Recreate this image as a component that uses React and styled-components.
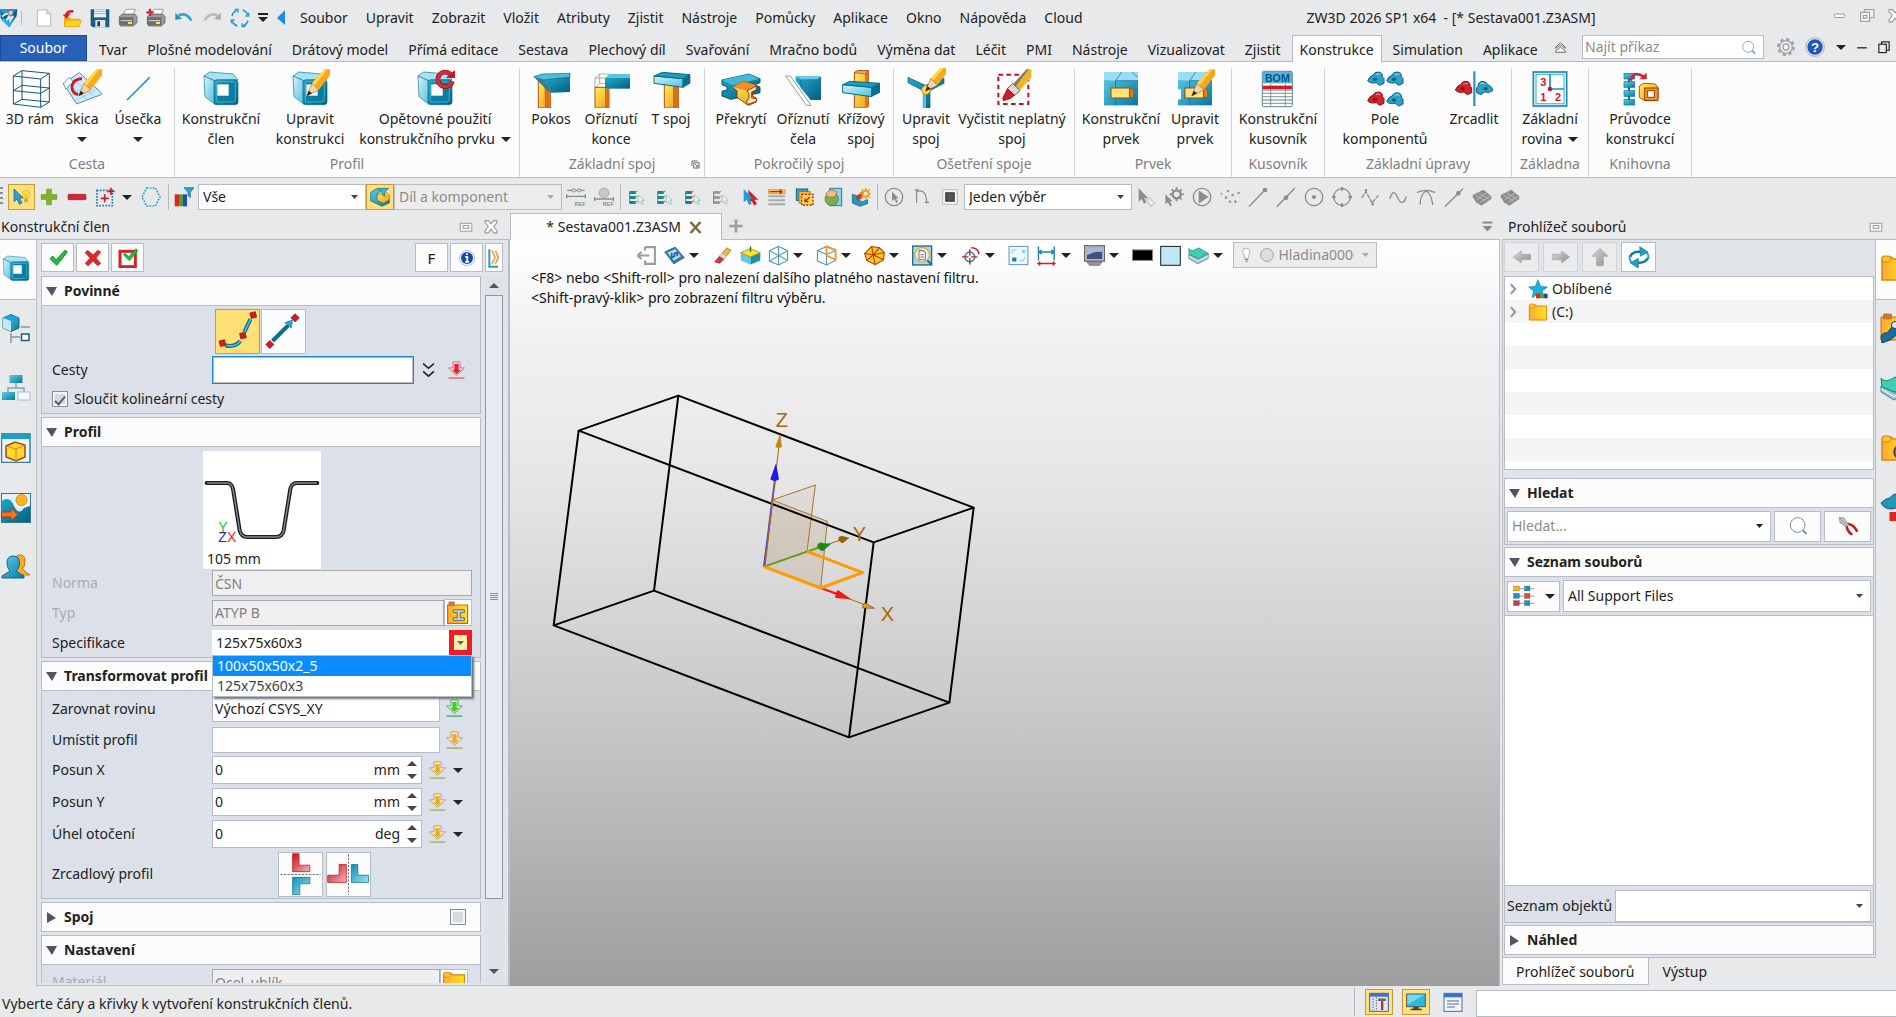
import React, { useState } from "react";
import styled, { createGlobalStyle } from "styled-components";

const GlobalStyle = createGlobalStyle`
    * {
        box-sizing: border-box;
    }

    body {
        margin: 0;
        background: #e8e9eb;
        color: #222222;
        font-family: "Noto Sans", "Open Sans", sans-serif;
        font-size: 14px;
        line-height: 20px;
        overflow: hidden;
    }

    button, input, select {
        font: inherit;
        color: inherit;
    }

    button {
        padding: 0;
        cursor: pointer;
    }

    svg {
        display: block;
        flex: none;
    }
`;

/* ---------- drawing helpers ---------- */

const Defs = () => (
    <svg width="0" height="0" aria-hidden="true">
        <defs>
            <linearGradient id="teal" x1="0" y1="0" x2="1" y2="1">
                <stop offset="0" stopColor="#5cd0ea" />
                <stop offset="1" stopColor="#08779e" />
            </linearGradient>
            <linearGradient id="tealDark" x1="0" y1="0" x2="1" y2="1">
                <stop offset="0" stopColor="#1fa9cd" />
                <stop offset="1" stopColor="#055e80" />
            </linearGradient>
            <linearGradient id="ice" x1="0" y1="0" x2="1" y2="1">
                <stop offset="0" stopColor="#d6f3fb" />
                <stop offset="1" stopColor="#4fc0de" />
            </linearGradient>
            <linearGradient id="gold" x1="0" y1="0" x2="1" y2="1">
                <stop offset="0" stopColor="#fff15a" />
                <stop offset="1" stopColor="#f09a1e" />
            </linearGradient>
            <linearGradient id="folder" x1="0" y1="0" x2="1" y2="0">
                <stop offset="0" stopColor="#ffab2e" />
                <stop offset="1" stopColor="#ffe41a" />
            </linearGradient>
            <linearGradient id="red" x1="0" y1="0" x2="1" y2="1">
                <stop offset="0" stopColor="#c8101c" />
                <stop offset="1" stopColor="#f6b4b8" />
            </linearGradient>
            <linearGradient id="cyan" x1="0" y1="0" x2="1" y2="1">
                <stop offset="0" stopColor="#0d8fb4" />
                <stop offset="1" stopColor="#9fe4f4" />
            </linearGradient>
            <linearGradient id="grey" x1="0" y1="0" x2="1" y2="1">
                <stop offset="0" stopColor="#dcdcdc" />
                <stop offset="1" stopColor="#8c8c8c" />
            </linearGradient>
        </defs>
    </svg>
);

const Cube = () => (
    <g>
        <path d="M9 24 26 12 96 18 111 36 40 38Z" fill="#a9e2f1" stroke="#0f7696" strokeWidth="2" />
        <path d="M9 24 40 38 42 109 12 86Z" fill="url(#ice)" stroke="#0f7696" strokeWidth="2" />
        <rect x="39" y="35" width="72" height="75" rx="9" fill="url(#tealDark)" stroke="#0b6a8c" strokeWidth="2" />
        <path d="M46 46Q46 42 50 42H98Q103 42 103 47V97Q103 102 98 102H51Q46 102 46 97Z" fill="#0b7ea3" stroke="#5ccbe4" strokeWidth="2" />
        <rect x="49" y="49" width="34" height="34" fill="#fff" />
    </g>
);

const Pencil = () => (
    <g>
        <path d="M66 46 104 4H120V22L86 66Z" fill="#f7a81c" />
        <path d="M66 46 104 4H112L73 53Z" fill="#ffd84a" />
        <path d="M50 84 66 46 86 66Z" fill="#f8d3a4" stroke="#a9713a" strokeWidth="2" />
        <path d="M50 84 56 68 66 76Z" fill="#222" />
    </g>
);

const Feature = () => (
    <g>
        <rect x="9" y="12" width="102" height="100" fill="url(#teal)" />
        <path d="M9 12H111V38H44L9 36Z" fill="#9bdcf4" />
        <path d="M44 38V112M44 38H111M62 12 44 38M92 12 111 28" stroke="#0a6a8e" strokeWidth="2" fill="none" />
        <rect x="30" y="60" width="56" height="30" fill="#ffe27a" stroke="#9a4a0a" strokeWidth="3" />
        <path d="M86 60 98 64V86L86 90Z" fill="#e07e10" stroke="#9a4a0a" strokeWidth="2" />
    </g>
);

const Blob = ({ x, y, c, d }) => (
    <g transform={`translate(${x} ${y})`}>
        <path d="M0 26Q6 12 16 10Q20 0 32 0Q46 2 44 14L49 20V34L36 40 26 32Q8 36 0 26Z" fill={c} stroke={d} strokeWidth="3" />
        <ellipse cx="22" cy="22" rx="7" ry="5" fill={d} />
        <path d="M24 8Q30 3 38 8" stroke="#fff" strokeWidth="3" fill="none" opacity=".6" />
    </g>
);

const PullArrow = ({ edge, fill }) => (
    <g>
        <path d="M19 3H41V22H55L30 46 5 22H19Z" fill="#fffbe8" stroke={edge} strokeWidth="3" />
        <path d="M23 9H37V28H45L30 42 15 28H23Z" fill={fill} />
        <path d="M5 54H55" stroke={edge} strokeWidth="4" />
    </g>
);

const FolderShape = () => (
    <g>
        <path d="M4 12Q4 8 8 8H22L27 12H56V54H4Z" fill="url(#folder)" stroke="#d9841a" strokeWidth="3" />
        <path d="M6 6H18L22 12 18 18H6L4 12Z" fill="#ffc428" stroke="#d9841a" strokeWidth="2" />
    </g>
);

const Printer = () => (
    <g>
        <path d="M14 22 24 4H52L44 24Z" fill="#fff" stroke="#777" strokeWidth="2" />
        <path d="M4 26 14 18H50L57 26V44L46 54H8L4 48Z" fill="#9a9a9a" stroke="#555" strokeWidth="2" />
        <path d="M4 28H46V52H8L4 48Z" fill="#6d6d6d" />
        <path d="M8 38H42" stroke="#ddd" strokeWidth="3" />
        <rect x="30" y="42" width="12" height="6" fill="#ffe928" />
    </g>
);

const Magnet = ({ c = "#8c8c8c", children }) => (
    <g fill="none" stroke={c} strokeWidth="4" strokeLinecap="round">{children}</g>
);

const Rows = ({ c, tick, bar = "#0f86a5" }) => (
    <g>
        <path d="M8 14V50" stroke="#777" strokeWidth="3" />
        {[12, 27, 42].map((y) => (
            <rect key={y} x="8" y={y} width="18" height="9" fill={bar} />
        ))}
        {[12, 27, 42].map((y) => (
            <path key={y} d={`M20 ${y + 3}l4 4 7-8`} stroke={tick} strokeWidth="3" fill="none" />
        ))}
        <path d="M34 24V48L40 42 44 52 49 50 45 40H52Z" fill="#f4f4f4" stroke={c} strokeWidth="2" />
    </g>
);

const WireCube = ({ children }) => (
    <g fill="none" stroke="#5b93b4" strokeWidth="3">
        <path d="M30 4 56 16V44L30 57 4 46V16Z" fill="#f2fbfe" />
        {children}
    </g>
);

/* large art is drawn on a 120 grid, small art on a 60 grid */
const LARGE = {
    frame: (
        <g fill="none" stroke="#14587a" strokeWidth="3">
            <path d="M10 24 92 33V118L10 108ZM36 8 118 16V102L36 94ZM10 24 36 8M92 33 118 16M92 118 118 102M10 108 36 94" />
            <path d="M10 68 92 76 118 60 36 52Z" />
        </g>
    ),
    sketch: (
        <g>
            <path d="M4 46 52 14 122 78 44 108Z" fill="#cdeaf8" stroke="#4a8fb2" strokeWidth="3" />
            <path d="M20 50 78 96M36 36 98 86M24 84 84 46M40 98 104 64" stroke="#86bfdc" strokeWidth="2" />
            <path d="M4 46 22 28 36 44 22 52 12 64Z" fill="#f0fafe" stroke="#2f6f92" strokeWidth="2" />
            <path d="M60 32Q30 34 30 60Q32 76 48 80" stroke="#d41222" strokeWidth="8" fill="none" />
            <Pencil />
        </g>
    ),
    line: <path d="M27 96 95 28" stroke="#219bc4" strokeWidth="5" />,
    cube: <Cube />,
    cubeEdit: (
        <g>
            <Cube />
            <Pencil />
        </g>
    ),
    cubeReuse: (
        <g>
            <Cube />
            <path d="M107 19A22 22 0 1 0 112 40" fill="none" stroke="#8d0e16" strokeWidth="14" />
            <path d="M107 19A22 22 0 1 0 112 40" fill="none" stroke="#dd2a33" strokeWidth="10" />
            <path d="M92 30H120V6Z" fill="#c71722" />
        </g>
    ),
    miter: (
        <g>
            <path d="M22 34 42 38 58 74V120H22Z" fill="url(#gold)" stroke="#b4520c" strokeWidth="3" />
            <path d="M40 40 56 72V120H42Z" fill="#d8701a" />
            <path d="M38 34 117 26V72L62 74Z" fill="url(#tealDark)" />
            <path d="M8 26 34 18 117 16V27L38 36Z" fill="#49bfdc" stroke="#0b6a8c" strokeWidth="2" />
            <path d="M8 26 38 36 64 76 50 68Z" fill="#2b7f99" />
        </g>
    ),
    trimEnd: (
        <g>
            <path d="M12 30 26 18H58V48L44 60H12ZM12 30H44M44 30V60M44 30 58 18M26 18V46H58M26 46 12 60" fill="none" stroke="#8b8b8b" strokeWidth="2" />
            <path d="M12 58H54V120H12Z" fill="url(#gold)" stroke="#b4520c" strokeWidth="3" />
            <path d="M42 62H54V120H42Z" fill="#d8701a" />
            <path d="M42 30H117V62H42Z" fill="url(#tealDark)" />
            <path d="M42 30 58 18H117V30Z" fill="#57c6e2" />
        </g>
    ),
    tee: (
        <g>
            <path d="M40 46H82V120H40Z" fill="url(#gold)" stroke="#b4520c" strokeWidth="3" />
            <path d="M66 50H82V120H66Z" fill="#d8701a" />
            <path d="M9 24 96 32V58L9 46Z" fill="url(#ice)" stroke="#0b6a8c" strokeWidth="3" />
            <path d="M9 24 34 13 117 20 96 32Z" fill="#1c9dc0" stroke="#0b6a8c" strokeWidth="3" />
            <path d="M96 32 117 20V46L96 58Z" fill="#0a6c8f" stroke="#0b6a8c" strokeWidth="2" />
        </g>
    ),
    overlap: (
        <g>
            <path d="M3 36 84 18 117 32V44L102 50 117 58V74L30 94 3 84V70L18 66 18 56 3 50Z" fill="url(#tealDark)" stroke="#07546f" strokeWidth="3" />
            <path d="M3 36 84 18 117 32 34 52Z" fill="#41b9d8" />
            <path d="M34 58 66 40 106 52 106 66 94 64V84L106 90V102L82 112 48 88 48 68Z" fill="url(#gold)" stroke="#9a3a0c" strokeWidth="3" />
            <path d="M34 58 66 40 106 52 78 68Z" fill="#ef9226" />
            <path d="M78 68 106 54V66L92 72V90L106 92V100L78 110V96L84 92V78Z" fill="#ffe9b0" stroke="#9a3a0c" strokeWidth="3" />
        </g>
    ),
    trimFace: (
        <g>
            <path d="M38 26H114V96H84L38 38Z" fill="url(#tealDark)" />
            <path d="M34 24 54 34H104L114 24Z" fill="#66cbe4" />
            <path d="M54 34V60L84 96" fill="none" stroke="#0a6484" strokeWidth="2" />
            <path d="M8 24H22L84 112H70Z" fill="none" stroke="#9b9b9b" strokeWidth="3" />
        </g>
    ),
    cross: (
        <g>
            <path d="M40 14 50 8H82V116L72 120H40Z" fill="url(#gold)" stroke="#b4420c" strokeWidth="3" />
            <path d="M72 18 82 8V116L72 120Z" fill="#e0771a" />
            <path d="M40 14 50 8H82L72 18Z" fill="#f0a860" stroke="#b4420c" strokeWidth="2" />
            <path d="M5 50 92 58V86L5 74Z" fill="url(#ice)" stroke="#0b6a8c" strokeWidth="3" />
            <path d="M5 50 26 40 117 46 92 58Z" fill="#1c9dc0" stroke="#0b6a8c" strokeWidth="3" />
            <path d="M92 58 117 46V74L92 86Z" fill="#0a6c8f" />
        </g>
    ),
    jointEdit: (
        <g>
            <path d="M6 28 58 52 114 30V46L72 68V120H52V68L6 44Z" fill="url(#tealDark)" stroke="#075a78" strokeWidth="2" />
            <path d="M52 68H60V120H52Z" fill="#55c6e2" />
            <circle cx="60" cy="66" r="13" fill="#ffe52a" stroke="#c88a10" strokeWidth="3" />
            <g transform="translate(8 -14)">
                <Pencil />
            </g>
        </g>
    ),
    clean: (
        <g>
            <rect x="19" y="20" width="90" height="88" fill="none" stroke="#c4121e" strokeWidth="6" strokeDasharray="14 10" />
            <path d="M62 50 104 4H118V28L82 68Z" fill="#f3b51e" />
            <path d="M62 50 104 4H110L70 57Z" fill="#7b7b7b" />
            <path d="M46 62 62 46 84 68 68 82Z" fill="#d9d9d9" stroke="#666" strokeWidth="3" />
            <path d="M46 62 68 82 54 92 34 98 32 90Z" fill="#cf1c2a" stroke="#7c0d14" strokeWidth="2" />
        </g>
    ),
    feature: <Feature />,
    featureEdit: (
        <g>
            <Feature />
            <path d="M4 64H18V94H4Z" fill="#fff" />
            <Pencil />
        </g>
    ),
    bom: (
        <g>
            <rect x="13" y="10" width="90" height="106" rx="4" fill="#fff" stroke="#5a8296" strokeWidth="3" />
            <path d="M14 12H102V46H14Z" fill="#55b4dd" />
            <path d="M14 66H102M14 76H102M14 86H102M14 96H102M14 106H102" stroke="#93a7b2" strokeWidth="4" />
            <path d="M38 46V114M82 46V114" stroke="#5a7686" strokeWidth="2" />
            <rect x="14" y="53" width="88" height="10" fill="#d41826" />
            <text x="58" y="41" textAnchor="middle" fontFamily="Liberation Sans, sans-serif" fontWeight="700" fontSize="32" fill="#0b5677">BOM</text>
        </g>
    ),
    pattern: (
        <g>
            <Blob x={8} y={12} c="#2ba3c6" d="#0b5f80" />
            <Blob x={65} y={12} c="#2ba3c6" d="#0b5f80" />
            <Blob x={8} y={72} c="#d3222e" d="#8c0f18" />
            <Blob x={65} y={74} c="#2ba3c6" d="#0b5f80" />
        </g>
    ),
    mirror: (
        <g>
            <path d="M61 10V114" stroke="#299dc2" strokeWidth="7" />
            <Blob x={4} y={40} c="#d3222e" d="#8c0f18" />
            <g transform="translate(119 0) scale(-1 1)">
                <Blob x={2} y={40} c="#2ba3c6" d="#0b5f80" />
            </g>
        </g>
    ),
    plane: (
        <g fontFamily="Liberation Sans, sans-serif" fontWeight="700" fontSize="33" fill="#cf1623">
            <rect x="10" y="12" width="100" height="102" fill="#f2fbfe" stroke="#178aad" strokeWidth="5" />
            <rect x="18" y="19" width="84" height="88" fill="#fff" stroke="#5cc4de" strokeWidth="4" />
            <path d="M60 18V63H102" fill="none" stroke="#1792b6" strokeWidth="5" />
            <circle cx="60" cy="63" r="7" />
            <text x="31" y="53">3</text>
            <text x="31" y="100">1</text>
            <text x="75" y="100">2</text>
        </g>
    ),
    wizard: (
        <g>
            <path d="M27 16V110" stroke="#0d6f92" strokeWidth="6" />
            {[16, 41, 68, 94].map((y) => (
                <rect key={y} x="12" y={y} width="32" height="17" fill="url(#teal)" stroke="#0b7a9c" strokeWidth="2" />
            ))}
            <path d="M32 38Q42 6 70 26" stroke="#d8222e" strokeWidth="8" fill="none" />
            <path d="M58 34 80 34 80 14Z" fill="#d8222e" />
            <path d="M58 54 72 46 106 48 114 60V92L104 98H74L58 88Z" fill="url(#gold)" stroke="#b4520c" strokeWidth="3" />
            <rect x="74" y="60" width="40" height="37" fill="#f59b1c" stroke="#8d3d08" strokeWidth="3" />
            <rect x="83" y="68" width="20" height="20" fill="#fff" stroke="#8d3d08" strokeWidth="3" />
        </g>
    ),
};

const SMALL = {
    logo: (
        <g>
            <path d="M0 4H52L50 24 28 58 2 30Z" fill="#0a5c96" />
            <path d="M0 4H50L40 14 6 16Z" fill="#1fa1e0" />
            <path d="M28 58 2 34 12 30 30 44 50 24Z" fill="#27b2ee" />
            <path d="M6 26Q20 12 30 20L20 36 40 24 28 42" stroke="#e6ecf0" strokeWidth="6" fill="none" />
            <circle cx="32" cy="14" r="8" fill="#c9ced2" stroke="#444" strokeWidth="2" />
        </g>
    ),
    file: <path d="M10 6H38L50 18V54H10ZM38 6V18H50" fill="#fff" stroke="#9aa0a8" strokeWidth="2" />,
    open: (
        <g>
            <path d="M6 26H22L28 32H54V56H6Z" fill="#f6a81c" />
            <path d="M12 36H58L52 56H8Z" fill="#ffd21e" stroke="#e79a16" strokeWidth="2" />
            <path d="M12 24Q14 8 34 10" stroke="#d5232d" strokeWidth="8" fill="none" />
            <path d="M2 20 26 16 14 32Z" fill="#d5232d" />
        </g>
    ),
    save: (
        <g>
            <path d="M2 4H58V58H8L2 52Z" fill="#1c5f86" />
            <rect x="12" y="4" width="36" height="24" fill="#e9f4fa" />
            <path d="M12 10H48M12 17H48" stroke="#7fbede" strokeWidth="3" />
            <rect x="16" y="36" width="30" height="22" fill="#dfe5ea" />
            <rect x="22" y="40" width="8" height="15" fill="#1c3f56" />
        </g>
    ),
    print: <Printer />,
    printAdd: (
        <g>
            <Printer />
            <path d="M12 2V24M1 13H23" stroke="#dc2430" strokeWidth="7" />
        </g>
    ),
    undo: (
        <g>
            <path d="M14 22Q38 12 52 38" stroke="#3aa4c8" strokeWidth="8" fill="none" />
            <path d="M4 14V36L24 32Z" fill="#2b93ba" />
        </g>
    ),
    redo: (
        <g>
            <path d="M46 22Q22 12 8 38" stroke="#b9bcbf" strokeWidth="8" fill="none" />
            <path d="M56 14V36L36 32Z" fill="#a6a9ac" />
        </g>
    ),
    loop: (
        <g fill="none" stroke="#2b9ec6" strokeWidth="5">
            <path d="M6 24A26 26 0 0 1 22 6M38 6A26 26 0 0 1 54 22M54 38A26 26 0 0 1 38 54M22 54A26 26 0 0 1 6 38" />
            <path d="M14 4H24V14M56 14V24H46M46 56H36V46M4 46V36H14" strokeWidth="4" />
        </g>
    ),
    pick: (
        <g>
            <path d="M6 6V44L15 36 22 52 30 48 23 33H34Z" fill="#1ea6dc" stroke="#0b5f96" strokeWidth="2" />
            <circle cx="42" cy="22" r="12" fill="#ffe04a" stroke="#dca51c" strokeWidth="2" />
            <path d="M37 20 42 26 47 20M42 26V34" stroke="#dca51c" strokeWidth="2" fill="none" />
            <path d="M37 35H47V46H37Z" fill="#d99a3c" />
        </g>
    ),
    plus: <path d="M22 4H38V22H56V38H38V56H22V38H4V22H22Z" fill="#7cb52c" stroke="#5f9618" strokeWidth="2" />,
    minus: <rect x="3" y="22" width="54" height="16" rx="3" fill="#cf2837" stroke="#a01824" strokeWidth="2" />,
    boxAdd: (
        <g>
            <rect x="6" y="10" width="46" height="46" fill="none" stroke="#1785ad" strokeWidth="5" strokeDasharray="5 4" />
            <path d="M29 22V46M17 34H41M48 2V24M37 13H59" stroke="#d0182a" strokeWidth="5" />
        </g>
    ),
    hex: <path d="M17 3H43L57 30 43 57H17L3 30Z" fill="none" stroke="#2e9cc4" strokeWidth="5" strokeDasharray="5 4" />,
    filter: (
        <g>
            <rect x="2" y="22" width="13" height="36" fill="#e0241e" />
            <rect x="15" y="22" width="12" height="36" fill="#46a52a" />
            <rect x="27" y="22" width="12" height="36" fill="#2446c0" />
            <path d="M30 2H60L49 16V32L42 26V16Z" fill="#2ba5cc" stroke="#0c6d90" strokeWidth="2" />
        </g>
    ),
    part: (
        <g>
            <path d="M2 16 22 4 34 10 22 22V40L40 48 58 38V48L36 58 2 42Z" fill="url(#teal)" stroke="#0b6282" strokeWidth="2" />
            <path d="M22 24 46 14 58 24V38L40 48 22 40Z" fill="url(#gold)" stroke="#b96a10" strokeWidth="2" />
            <path d="M26 4H56L44 16V28L36 22V16Z" fill="#39b6dc" stroke="#0c6d90" strokeWidth="2" />
        </g>
    ),
    refA: (
        <g>
            <path d="M4 10H18M28 10H34M44 10H56M2 28H58" stroke="#8c8c8c" strokeWidth="4" />
            <path d="M2 22V34M58 22V34" stroke="#8c8c8c" strokeWidth="4" />
            <circle cx="23" cy="10" r="5" fill="none" stroke="#8c8c8c" strokeWidth="3" />
            <circle cx="39" cy="10" r="5" fill="none" stroke="#8c8c8c" strokeWidth="3" />
            <text x="26" y="56" fontSize="17" fontWeight="700" fill="#8c8c8c" fontFamily="Liberation Sans, sans-serif">REF</text>
        </g>
    ),
    refB: (
        <g>
            <circle cx="30" cy="18" r="15" fill="#c9c9c9" stroke="#9a9a9a" strokeWidth="2" />
            <path d="M2 36H58M2 30V42M58 30V42" stroke="#8c8c8c" strokeWidth="4" />
            <text x="26" y="58" fontSize="17" fontWeight="700" fill="#8c8c8c" fontFamily="Liberation Sans, sans-serif">REF</text>
        </g>
    ),
    listA: <Rows c="#8aa" tick="#3c9a28" />,
    listB: <Rows c="#8aa" tick="#3c9a28" />,
    listRed: <Rows c="#8aa" tick="#c8303a" />,
    listC: <Rows c="#aaa" tick="#9a9a9a" bar="#9c9c9c" />,
    cursorRed: (
        <g>
            <path d="M28 8V50L38 42 46 56 54 50 46 38H58Z" fill="#d91e2a" />
            <path d="M14 6V46L23 38 30 54 38 50 31 35H42Z" fill="#17a2d8" />
        </g>
    ),
    layersRed: (
        <g>
            <path d="M4 8H54V20H4Z" fill="#ffd24a" stroke="#b98a14" strokeWidth="2" />
            <path d="M8 14H44L38 8M44 14 38 20" stroke="#c8141e" strokeWidth="4" fill="none" />
            <path d="M4 28H54M4 40H54M4 52H54" stroke="#a7abb0" strokeWidth="6" />
        </g>
    ),
    boxes: (
        <g>
            <rect x="4" y="6" width="34" height="34" fill="#3ba7c6" stroke="#0c6482" strokeWidth="3" />
            <rect x="12" y="14" width="34" height="34" fill="#f6b52c" stroke="#a35c0a" strokeWidth="2" />
            <rect x="20" y="22" width="34" height="32" fill="#ffe04a" stroke="#c8141e" strokeWidth="4" strokeDasharray="6 4" />
            <path d="M30 44 44 30M30 44V34M30 44H40" stroke="#c8141e" strokeWidth="4" />
        </g>
    ),
    globe: (
        <g>
            <rect x="20" y="4" width="36" height="52" fill="#8fd3ea" stroke="#1c83a8" strokeWidth="3" />
            <circle cx="26" cy="36" r="20" fill="#7cae5a" stroke="#3d6a48" strokeWidth="2" />
            <path d="M8 20Q24 0 42 16L36 30H14Z" fill="#f0bb7c" stroke="#99612a" strokeWidth="2" />
        </g>
    ),
    gearCube: (
        <g>
            <path d="M4 22 18 26V38L34 44 50 38V50L26 58 4 48Z" fill="#2a97ba" stroke="#0b5c7a" strokeWidth="2" />
            <path d="M18 26 34 12V34L18 42Z" fill="#d7303a" />
            <circle cx="44" cy="20" r="9" fill="none" stroke="#f2a21e" strokeWidth="7" />
            <path d="M44 2V10M44 30V38M26 20H34M54 20H60M31 7 37 13M51 27 57 33M57 7 51 13M37 27 31 33" stroke="#f2a21e" strokeWidth="4" />
        </g>
    ),
    gArrow: (
        <Magnet>
            <circle cx="30" cy="30" r="26" />
            <path d="M24 14V42L31 36 37 48 42 45 36 34H44Z" fill="#8c8c8c" stroke="none" />
        </Magnet>
    ),
    gCurve: (
        <Magnet>
            <path d="M12 6V48M6 6H18M12 12Q44 0 46 50M40 48H52" />
        </Magnet>
    ),
    gSquare: (
        <g>
            <rect x="6" y="6" width="48" height="48" fill="#f4f4f4" stroke="#999" strokeWidth="2" />
            <rect x="16" y="16" width="28" height="28" fill="#555" stroke="#222" strokeWidth="3" />
        </g>
    ),
    gHand: (
        <g>
            <path d="M8 4V44L17 36 24 50 31 46 25 33H36Z" fill="#8c8c8c" />
            <path d="M30 38 40 32 56 50 44 58Z" fill="#eee" stroke="#999" strokeWidth="2" />
        </g>
    ),
    gGear: (
        <g>
            <circle cx="38" cy="22" r="12" fill="none" stroke="#8c8c8c" strokeWidth="7" />
            <path d="M38 1V8M38 36V43M17 22H24M52 22H59M23 7 29 13M47 31 53 37M53 7 47 13" stroke="#8c8c8c" strokeWidth="6" />
            <path d="M4 22V52L12 46 18 58 24 55 18 43H26Z" fill="#8c8c8c" />
        </g>
    ),
    gPlay: (
        <Magnet>
            <circle cx="30" cy="30" r="26" />
            <path d="M22 14 46 30 22 46Z" fill="#8c8c8c" />
        </Magnet>
    ),
    gDots: (
        <g fill="#999">
            <circle cx="4" cy="20" r="3" />
            <circle cx="24" cy="12" r="4" />
            <circle cx="38" cy="24" r="4" />
            <circle cx="56" cy="18" r="4" />
            <circle cx="18" cy="32" r="4" />
            <circle cx="30" cy="44" r="4" />
            <circle cx="46" cy="44" r="4" />
        </g>
    ),
    gLine: (
        <Magnet>
            <path d="M4 58 50 10" />
            <circle cx="51" cy="9" r="5" fill="#8c8c8c" />
        </Magnet>
    ),
    gMid: (
        <Magnet>
            <path d="M4 58 56 4" />
            <circle cx="30" cy="32" r="5" fill="#8c8c8c" />
        </Magnet>
    ),
    gCentre: (
        <Magnet>
            <circle cx="30" cy="30" r="26" />
            <circle cx="30" cy="30" r="4" fill="#8c8c8c" />
        </Magnet>
    ),
    gQuad: (
        <Magnet>
            <circle cx="30" cy="30" r="25" />
            <path d="M30 3V7M30 53V57M3 30H7M53 30H57" strokeWidth="8" />
        </Magnet>
    ),
    gWave: (
        <Magnet>
            <path d="M6 32 18 14 36 48 54 26" strokeDasharray="10 6" />
            <circle cx="18" cy="10" r="2" />
            <circle cx="38" cy="52" r="2" />
        </Magnet>
    ),
    gSine: (
        <Magnet>
            <path d="M6 34Q16 4 26 26T42 46Q50 46 54 30" />
        </Magnet>
    ),
    gArch: (
        <Magnet>
            <path d="M4 16Q30 4 56 16M12 52Q14 20 30 12Q46 20 50 52" />
        </Magnet>
    ),
    gSlash: (
        <Magnet>
            <path d="M4 58 56 6" />
            <circle cx="43" cy="19" r="5" fill="#8c8c8c" />
        </Magnet>
    ),
    gMesh: (
        <g>
            <path d="M2 24 34 8 58 28 58 36 46 44 28 56 12 46 2 30Z" fill="#8d8d8d" />
            <path d="M10 24 40 42M20 18 50 36M14 38 44 18M24 46 54 28" stroke="#d0d0d0" strokeWidth="2" />
        </g>
    ),
    check: <path d="M6 32 14 24 24 36 52 6 58 12 26 52Z" fill="#1fbf3c" stroke="#0f8a24" strokeWidth="3" />,
    cross: <path d="M12 4 30 20 46 4 56 10 40 30 56 48 46 56 30 40 14 56 4 48 20 30 4 12Z" fill="#e2242c" stroke="#a8141c" strokeWidth="2" />,
    checkBox: (
        <g>
            <rect x="6" y="10" width="46" height="46" fill="#fff" stroke="#d8202a" strokeWidth="9" />
            <path d="M16 20 22 16 32 26 54 2 60 8 34 38Z" fill="#1fbf3c" stroke="#0f8a24" strokeWidth="2" />
        </g>
    ),
    info: (
        <g>
            <circle cx="30" cy="30" r="25" fill="#fff" stroke="#9cb4dc" strokeWidth="3" />
            <circle cx="30" cy="30" r="20" fill="#1748ae" />
            <path d="M30 14V20M24 26H31V42M24 43H37" stroke="#fff" strokeWidth="6" fill="none" />
        </g>
    ),
    dock: (
        <g>
            <path d="M16 4V56H42" stroke="#2b9cc0" strokeWidth="6" fill="none" />
            <path d="M24 8 33 28 24 48M34 8 43 28 34 48" stroke="#f0a03c" strokeWidth="5" fill="none" />
        </g>
    ),
    tree: (
        <g>
            <path d="M4 10 20 3 36 10V30L20 37 4 30Z" fill="url(#teal)" stroke="#0b6a8c" strokeWidth="2" />
            <path d="M4 10 20 16 36 10 20 3Z" fill="#19a5cd" />
            <path d="M4 10 20 16V37L4 30Z" fill="#c9e6f4" />
            <path d="M40 28H58M20 40V60M20 48H38" stroke="#7c98aa" strokeWidth="3" />
            <rect x="41" y="42" width="15" height="13" fill="#fff" stroke="#1f5d7e" strokeWidth="3" />
        </g>
    ),
    org: (
        <g>
            <path d="M30 18V30M14 42V30H46V42" stroke="#8ba2ae" strokeWidth="3" fill="none" />
            <rect x="17" y="4" width="26" height="16" fill="url(#teal)" />
            <rect x="2" y="38" width="26" height="16" fill="url(#teal)" />
            <rect x="34" y="38" width="24" height="16" fill="#f3fafc" stroke="#9fbfce" strokeWidth="2" />
        </g>
    ),
    window: (
        <g>
            <rect x="1" y="1" width="57" height="58" fill="#e6f5fb" stroke="#3b7fa0" strokeWidth="3" />
            <path d="M0 0H59V12H0Z" fill="#1f9ec4" />
            <path d="M10 26 28 18 48 24V48L30 56 10 48Z" fill="#ffd92e" stroke="#b4420c" strokeWidth="3" />
            <path d="M10 26 30 32 48 24M30 32V56" stroke="#d9841a" strokeWidth="2" fill="none" />
        </g>
    ),
    scene: (
        <g>
            <rect x="1" y="1" width="58" height="58" fill="#e2f2f9" stroke="#2f7696" strokeWidth="2" />
            <path d="M1 16Q18 4 26 26Q36 46 46 30L58 26V58H1Z" fill="url(#tealDark)" />
            <circle cx="41" cy="14" r="11" fill="#ffb424" stroke="#e08a12" strokeWidth="2" />
            <path d="M1 38H20V30L34 43 20 56V48H1Z" fill="#f2732a" stroke="#a83e0a" strokeWidth="2" />
        </g>
    ),
    users: (
        <g>
            <path d="M34 4Q50 2 48 18Q48 28 42 32L58 44H36L26 30V12Z" fill="#f9ad1e" stroke="#c97a0c" strokeWidth="2" />
            <path d="M12 20Q12 6 24 6Q38 6 37 22Q36 32 30 36L46 46V50H2V46L18 36Q12 30 12 20Z" fill="url(#teal)" stroke="#0b6a8c" strokeWidth="2" />
        </g>
    ),
    pathCurve: (
        <g>
            <path d="M12 50Q26 54 34 44" stroke="#0c7396" strokeWidth="6" fill="none" />
            <path d="M40 31 49 12" stroke="#0c7396" strokeWidth="6" />
            <path d="M12 50Q26 54 34 44M40 31 49 12" stroke="#5fc8e2" strokeWidth="2" fill="none" />
            <path d="M3 44 11 42 13 50 5 52ZM33 33 41 31 43 39 35 41ZM48 3 56 1 58 9 50 11Z" fill="#d11a28" stroke="#8c0f18" />
        </g>
    ),
    pathLine: (
        <g>
            <path d="M14 44 38 20" stroke="#0c6d90" strokeWidth="6" />
            <path d="M44 12 42 26 31 17Z" fill="#25a0c4" />
            <path d="M4 49 10 43 16 49 10 55ZM41 10 47 4 53 10 47 16Z" fill="#d11a28" stroke="#8c0f18" />
        </g>
    ),
    pullRed: <PullArrow edge="#c8646c" fill="#e8223c" />,
    pullGreen: <PullArrow edge="#3aa864" fill="#3cd02a" />,
    pullGold: <PullArrow edge="#a8a052" fill="#f4a832" />,
    more: <path d="M13 8 30 23 47 8M13 33 30 48 47 33" stroke="#222" strokeWidth="5" fill="none" />,
    lib: (
        <g>
            <path d="M4 10H54V56H4Z" fill="url(#folder)" stroke="#b97412" strokeWidth="3" />
            <rect x="6" y="1" width="16" height="12" rx="3" fill="#c8773c" />
            <path d="M18 22H46V29H36V42H46V49H18V42H28V29H18Z" fill="#ccc" stroke="#555" strokeWidth="2" />
        </g>
    ),
    folder: <FolderShape />,
    mirrorH: (
        <g>
            <path d="M2 30H58" stroke="#333" strokeWidth="1" strokeDasharray="3 2" />
            <path d="M19 1H28V17H43V26H19Z" fill="url(#red)" stroke="#b4101c" />
            <path d="M19 34H43V43H29V58H19Z" fill="url(#cyan)" stroke="#0b6a8c" />
        </g>
    ),
    mirrorV: (
        <g>
            <path d="M30 2V58" stroke="#333" strokeWidth="1" strokeDasharray="3 2" />
            <path d="M17 16H27V41H1V31H17Z" fill="url(#red)" stroke="#b4101c" />
            <path d="M34 16H43V31H58V41H34Z" fill="url(#cyan)" stroke="#0b6a8c" />
        </g>
    ),
    exit: <path d="M26 6H54V54H26V44M26 6V16M4 30H38M4 30 16 20M4 30 16 40" fill="none" stroke="#9c9c9c" strokeWidth="6" />,
    style: (
        <g>
            <path d="M2 20 32 6 58 36 28 54Z" fill="#3a7fa6" stroke="#1d5576" strokeWidth="2" />
            <path d="M10 22 32 12 48 32 28 44Z" fill="#bfe0f2" />
            <path d="M22 22V36L30 32V24L38 22V32" stroke="#15639a" strokeWidth="5" fill="none" />
        </g>
    ),
    eraser: (
        <g>
            <path d="M22 32 42 8 54 15 34 40Z" fill="#f2b63a" stroke="#97640e" strokeWidth="2" />
            <path d="M8 48 22 32 34 40 22 52Z" fill="#d8323e" stroke="#98141e" strokeWidth="2" />
            <path d="M22 32 28 25 40 33 34 40Z" fill="#ddd" />
        </g>
    ),
    slab: (
        <g>
            <path d="M2 22 30 34V56L2 44Z" fill="#6cc7e6" />
            <path d="M30 34 58 22V44L30 56Z" fill="#1c8cb0" />
            <path d="M2 22 30 10 58 22 30 34Z" fill="#ffe32a" stroke="#8a7a10" strokeWidth="2" />
            <path d="M30 4V20" stroke="#1f8a3a" strokeWidth="4" />
        </g>
    ),
    wire: (
        <WireCube>
            <path d="M30 4V57M4 16 56 44M56 16 4 46" />
        </WireCube>
    ),
    face: (
        <WireCube>
            <path d="M4 16 30 27 56 16M30 27V57" />
            <path d="M30 4 56 14V42L30 30Z" stroke="#f29a1e" strokeWidth="5" />
        </WireCube>
    ),
    shade: (
        <g stroke="#b43a0c" strokeWidth="3">
            <path d="M22 4 44 8 58 22 56 42 32 56 8 44 2 24Z" fill="#ffc61e" />
            <path d="M2 24 26 28 58 22M22 4 26 28 32 56M44 8 26 28 8 44M26 28 56 42" fill="none" />
        </g>
    ),
    zoomPage: (
        <g>
            <rect x="2" y="3" width="54" height="54" fill="#a6dcf0" stroke="#1e6f96" strokeWidth="4" />
            <circle cx="29" cy="28" r="21" fill="#e9edf0" stroke="#e8b020" strokeWidth="4" />
            <path d="M20 16H32L38 22V42H20Z" fill="#fff" stroke="#777" strokeWidth="3" />
            <path d="M24 28H34M24 34H34" stroke="#777" strokeWidth="3" />
            <path d="M44 44 56 56" stroke="#1e6f96" strokeWidth="6" />
        </g>
    ),
    target: (
        <g fill="none">
            <circle cx="28" cy="34" r="14" stroke="#2f7fa2" strokeWidth="4" />
            <path d="M28 12V56M6 34H50" stroke="#c81c2a" strokeWidth="4" />
            <path d="M32 8Q52 8 54 26" stroke="#c81c2a" strokeWidth="4" />
            <circle cx="28" cy="34" r="4" fill="#fff" />
        </g>
    ),
    fit: (
        <g>
            <rect x="3" y="4" width="54" height="52" fill="#eef8fc" stroke="#5f9cba" strokeWidth="3" />
            <path d="M12 26V14H24M48 34Q46 46 34 46" stroke="#8cd2e4" strokeWidth="3" fill="none" />
            <rect x="12" y="36" width="12" height="11" fill="#2278a0" />
            <rect x="40" y="14" width="9" height="9" fill="#8ad2e8" />
        </g>
    ),
    dim: (
        <g>
            <path d="M7 4V44M52 4V44M10 20H50M16 14 9 20 16 26M44 14 51 20 44 26" stroke="#1e86aa" strokeWidth="4" fill="none" />
            <path d="M6 53H54M12 48 6 53 12 58M48 48 54 53 48 58" stroke="#d41e2a" strokeWidth="4" fill="none" />
        </g>
    ),
    monitor: (
        <g>
            <rect x="1" y="2" width="58" height="44" fill="#b9bcc2" stroke="#555" strokeWidth="3" />
            <rect x="8" y="8" width="44" height="32" fill="#3e4f80" />
            <path d="M8 8H52V20Q30 16 8 30Z" fill="#a9b6d4" />
            <path d="M8 48H52L44 58H16Z" fill="#9a9a9a" stroke="#555" strokeWidth="2" />
        </g>
    ),
    blackBar: <rect x="1" y="14" width="58" height="30" fill="#000" stroke="#888" strokeWidth="3" />,
    blueBox: <rect x="2" y="4" width="56" height="54" fill="#bde6f6" stroke="#222" strokeWidth="3" />,
    sheets: (
        <g>
            <path d="M2 26V38L28 54 58 38V24L30 40Z" fill="#9fc5d8" stroke="#4b7f98" strokeWidth="2" />
            <path d="M2 32 28 47 58 32" stroke="#fff" strokeWidth="2" fill="none" />
            <path d="M2 10Q10 22 30 8L58 24 30 38 4 28Z" fill="#3fd0b2" stroke="#158a78" strokeWidth="2" />
        </g>
    ),
    bulb: (
        <g>
            <path d="M20 6Q30 2 38 8Q46 18 38 28L36 40H24L22 28Q12 16 20 6Z" fill="#fff" stroke="#aaa" strokeWidth="3" />
            <path d="M24 44H36M26 50H34" stroke="#888" strokeWidth="4" />
        </g>
    ),
    disc: <circle cx="30" cy="30" r="24" fill="#dedede" stroke="#909090" strokeWidth="3" />,
    back: <path d="M4 30 28 12V22H56V38H28V48Z" fill="url(#grey)" stroke="#a4a4a4" strokeWidth="2" />,
    forward: <path d="M56 30 32 12V22H4V38H32V48Z" fill="url(#grey)" stroke="#a4a4a4" strokeWidth="2" />,
    up: <path d="M30 4 54 28H40V56H20V28H6Z" fill="url(#grey)" stroke="#a4a4a4" strokeWidth="2" />,
    refresh: (
        <g>
            <path d="M6 30Q10 14 36 16" stroke="#0e7c9e" strokeWidth="7" fill="none" />
            <path d="M54 32Q50 46 24 46" stroke="#0e7c9e" strokeWidth="7" fill="none" />
            <path d="M32 2 54 16 34 28Z" fill="#1ea0c4" stroke="#0e7c9e" strokeWidth="2" />
            <path d="M28 34 6 46 28 60Z" fill="#1ea0c4" stroke="#0e7c9e" strokeWidth="2" />
            <path d="M50 18Q58 24 55 36M10 44Q2 38 5 26" stroke="#1ea0c4" strokeWidth="5" fill="none" />
        </g>
    ),
    chevron: <path d="M22 12 38 30 22 48" stroke="#999" strokeWidth="8" fill="none" />,
    star: (
        <g>
            <path d="M30 2 38 22 58 24 43 36 48 56 30 46 12 56 17 36 2 24 22 22Z" fill="#1cb0dc" stroke="#0f86ac" strokeWidth="2" />
            <rect x="24" y="44" width="12" height="14" fill="#e0241e" />
            <rect x="36" y="44" width="12" height="14" fill="#46a52a" />
            <rect x="48" y="44" width="11" height="14" fill="#2446a0" />
        </g>
    ),
    search: (
        <g>
            <circle cx="29" cy="27" r="22" fill="#fff" stroke="#8a8a8a" strokeWidth="3" />
            <path d="M45 43 56 54" stroke="#3c8fb6" strokeWidth="5" />
        </g>
    ),
    pliers: (
        <g fill="none">
            <path d="M32 24Q48 28 56 44M26 30Q28 46 40 54" stroke="#cc1822" strokeWidth="8" strokeLinecap="round" />
            <path d="M4 4 18 6 32 26 26 32 6 20Z" fill="#c4c4c4" stroke="#777" strokeWidth="2" />
            <path d="M6 8 26 26" stroke="#777" strokeWidth="2" />
        </g>
    ),
    grid: (
        <g>
            <path d="M4 10H58M4 30H58M4 50H58" stroke="#777" strokeWidth="2" />
            <rect x="2" y="3" width="15" height="13" fill="#ffb61e" stroke="#8a5a0a" />
            <rect x="32" y="3" width="14" height="13" fill="#2a8fc0" stroke="#0b4f70" />
            <rect x="2" y="23" width="15" height="13" fill="#2a8fc0" stroke="#0b4f70" />
            <rect x="32" y="23" width="14" height="13" fill="#e0501e" stroke="#7a1d0a" />
            <rect x="2" y="43" width="15" height="13" fill="#c83a4a" stroke="#0b4f70" />
            <rect x="32" y="43" width="14" height="13" fill="#2a8fc0" stroke="#0b4f70" />
        </g>
    ),
    folderPart: (
        <g>
            <path d="M2 8H58V54H2Z" fill="url(#folder)" stroke="#b97412" strokeWidth="2" />
            <rect x="6" y="1" width="18" height="12" rx="3" fill="#c8773c" />
            <path d="M2 46Q6 38 14 40L24 28Q30 18 38 24V40L20 54 4 60Z" fill="#1c6d98" stroke="#0b4662" strokeWidth="2" />
            <circle cx="30" cy="24" r="7" fill="#dfeaf0" stroke="#0b4662" strokeWidth="2" />
        </g>
    ),
    folderBall: (
        <g>
            <FolderShape />
            <circle cx="42" cy="38" r="14" fill="#d8442a" stroke="#4a3a6a" strokeWidth="3" />
        </g>
    ),
    partRed: (
        <g>
            <path d="M2 20Q12 10 20 10Q26 0 40 2V28L24 32Q8 32 2 20Z" fill="#2496bc" stroke="#0b5f80" strokeWidth="2" />
            <rect x="19" y="38" width="20" height="18" fill="#e2241e" />
        </g>
    ),
    tools: (
        <g>
            <rect x="2" y="4" width="56" height="54" fill="#dce8f6" stroke="#3f62a8" strokeWidth="3" />
            <path d="M2 4H58V14H2Z" fill="#3a6fd4" />
            <path d="M12 20V54M22 16V56" stroke="#555" strokeWidth="3" strokeDasharray="4 4" />
            <path d="M28 20H50V27H43V54H36V27H28Z" fill="#c62a2a" />
            <path d="M28 20H50V27H28Z" fill="#666" />
        </g>
    ),
    screen: (
        <g>
            <rect x="2" y="6" width="56" height="38" fill="#29bcd8" stroke="#555" strokeWidth="3" />
            <path d="M4 8H56L4 38Z" fill="#6fdcee" />
            <path d="M22 44H38V50H48V55H14V50H22Z" fill="#444" />
        </g>
    ),
    note: (
        <g>
            <rect x="3" y="4" width="54" height="54" fill="#f2f5fa" stroke="#4a69ac" strokeWidth="3" />
            <path d="M3 4H57V16H3Z" fill="#3a6fd4" />
            <path d="M12 27H48M12 36H48M12 45H36" stroke="#8b97aa" strokeWidth="4" />
        </g>
    ),
    gear: (
        <g fill="none" stroke="#a2a6aa">
            <circle cx="30" cy="30" r="23" strokeWidth="8" strokeDasharray="10 8" />
            <circle cx="30" cy="30" r="19" fill="#eceded" strokeWidth="4" />
            <circle cx="30" cy="30" r="9" fill="#f6f6f6" strokeWidth="4" />
        </g>
    ),
    help: (
        <g>
            <circle cx="30" cy="30" r="28" fill="#e2e8f2" stroke="#8796b2" strokeWidth="2" />
            <circle cx="30" cy="30" r="23" fill="#2257b8" />
            <text x="30" y="44" textAnchor="middle" fontFamily="Liberation Sans, sans-serif" fontWeight="700" fontSize="40" fill="#fff">?</text>
        </g>
    ),
    collapse: <path d="M8 28 30 8 52 28V34L30 18 8 34ZM8 46 30 28 52 46V52H8Z" fill="#fff" stroke="#555" strokeWidth="4" />,
    winMin: <rect x="10" y="24" width="40" height="14" rx="3" fill="#fff" stroke="#999" strokeWidth="4" />,
    winRestore: (
        <g fill="#f4f4f4" stroke="#999" strokeWidth="4">
            <rect x="22" y="6" width="34" height="30" />
            <rect x="6" y="16" width="34" height="34" />
            <rect x="16" y="28" width="14" height="10" />
        </g>
    ),
    mdiMin: <path d="M6 34H54" stroke="#333" strokeWidth="7" />,
    mdiRestore: (
        <g fill="#e8e9eb" stroke="#222" strokeWidth="5">
            <rect x="20" y="8" width="32" height="36" />
            <rect x="8" y="18" width="32" height="36" />
        </g>
    ),
    pin: (
        <g fill="#f4f4f4" stroke="#999" strokeWidth="4">
            <rect x="5" y="14" width="50" height="34" />
            <rect x="18" y="24" width="24" height="12" />
        </g>
    ),
    closeX: <path d="M8 6H20L30 18 40 6H52V14L40 28 52 44V52H40L30 38 20 52H8V44L20 28 8 14Z" fill="#fff" stroke="#999" strokeWidth="4" />,
    tabX: <path d="M10 8 50 52M50 8 10 52" stroke="#7a6838" strokeWidth="10" />,
    tabPlus: <path d="M30 8V52M8 30H52" stroke="#a49c9c" strokeWidth="9" />,
    tabMenu: <path d="M10 10H50V18H10ZM10 28H50L30 50Z" fill="#8d8a8a" />,
    launcher: <path d="M6 40V6H44M18 18H54V54H18ZM24 24 46 46M46 30V46H30" fill="none" stroke="#666" strokeWidth="6" />,
};

const Art = ({ name, size = 20, large }) => (
    <svg width={size} height={size} viewBox={large ? "0 0 120 120" : "0 0 60 60"} aria-hidden="true">
        {large ? LARGE[name] : SMALL[name]}
    </svg>
);

const Caret = ({ small, color = "#222", dir = "down" }) => {
    const d = { down: "M0 0H10L5 5Z", up: "M0 5H10L5 0Z" }[dir];
    return (
        <svg width={small ? 7 : 10} height={small ? 4 : 5} viewBox="0 0 10 5" preserveAspectRatio="none" aria-hidden="true">
            <path d={d} fill={color} />
        </svg>
    );
};

/* ---------- shell ---------- */

const Shell = styled.div`
    display: flex;
    flex-direction: column;
    height: 100vh;
    overflow: hidden;
    white-space: nowrap;
`;

const TitleBar = styled.header`
    display: flex;
    align-items: center;
    height: 35px;
`;

const Divider = styled.span`
    width: 1px;
    height: ${(props) => props.$h || 26}px;
    margin: 0 ${(props) => props.$gap || 1}px;
    background: #b4b8bf;
`;

const Slot = styled.button`
    display: flex;
    align-items: center;
    justify-content: center;
    flex: none;
    width: ${(props) => props.$w || 28}px;
    height: 26px;
    background: none;
    border: 1px solid transparent;
    ${(props) => props.$on && `
        background: #ffe07a;
        border-color: #c99a3a;
    `}
`;

const QuickTools = styled.div`
    display: flex;
    padding-left: 7px;
`;

const Menu = styled.nav`
    display: flex;
    gap: 18px;
    margin-left: 10px;
`;

const MenuItem = styled.button`
    background: none;
    border: none;
`;

const AppTitle = styled.div`
    flex: 1;
    padding-left: 224px;
    overflow: hidden;
`;

const WindowButtons = styled.div`
    display: flex;
    margin: -4px -13px 0 0;
`;

const TabBar = styled.div`
    display: flex;
    height: 27px;
    border-bottom: 1px solid #b8bcc4;
`;

const FileTab = styled.button`
    width: 87px;
    height: 26px;
    margin-right: 2px;
    background: #2860b8;
    border: 1px solid #1c4c9c;
    color: #ffffff;
`;

const RibbonTab = styled.button`
    height: 27px;
    padding: ${(props) => (props.$on ? "2px 7px 0" : "3px 10px 0")};
    margin: ${(props) => (props.$on ? "0 1px" : "0")};
    background: ${(props) => (props.$on ? "#fcfcfc" : "none")};
    border: ${(props) => (props.$on ? "1px solid #b8bcc4" : "none")};
    border-bottom: none;
`;

const TabTools = styled.div`
    display: flex;
    align-items: center;
    margin-left: auto;
    height: 24px;
`;

const SearchField = styled.label`
    display: flex;
    align-items: center;
    width: 182px;
    height: 24px;
    margin: 0 8px 0 10px;
    padding-right: 7px;
    background: #ffffff;
    border: 1px solid #b8bcc4;

    input {
        flex: 1;
        min-width: 0;
        padding: 0 2px;
        background: none;
        border: none;
        outline: none;
    }

    input::placeholder {
        color: #8c8c8c;
    }
`;

const Ribbon = styled.div`
    display: flex;
    height: 116px;
    background: #fcfcfc;
    border-bottom: 1px solid #b8bcc4;
`;

const RibbonGroup = styled.section`
    display: flex;
    flex-direction: column;
    flex: none;
    width: ${(props) => props.$w}px;
    margin-top: 6px;
    border-right: 1px solid #d0d3d8;
`;

const Tools = styled.div`
    display: flex;
    flex: 1;
    padding-left: ${(props) => props.$pad || 0}px;
`;

const Tool = styled.button`
    display: flex;
    flex-direction: column;
    align-items: center;
    width: ${(props) => props.$w}px;
    background: none;
    border: none;

    > svg {
        margin-bottom: 1px;
    }
`;

const ToolLine = styled.span`
    display: flex;
    align-items: center;
    gap: 6px;
    height: 20px;
`;

const GroupCaption = styled.div`
    display: flex;
    align-items: center;
    justify-content: center;
    height: 26px;
    color: #7f7f7f;
    position: relative;

    svg {
        position: absolute;
        right: 4px;
    }
`;

const SelectionBar = styled.div`
    display: flex;
    align-items: center;
    height: 35px;
    padding-top: 3px;
    flex: none;
`;

const Handle = styled.span`
    width: 3px;
    height: 20px;
    margin-right: 5px;
    background: repeating-linear-gradient(#8c8c8c 0 2px, #e8e9eb 2px 5px);
`;

const SelectBox = styled.span`
    display: flex;
    align-items: center;
    position: relative;
    flex: ${(props) => (props.$w ? "none" : 1)};
    width: ${(props) => (props.$w ? `${props.$w}px` : "auto")};
    height: ${(props) => props.$h || 26}px;
    background: ${(props) => (props.$off ? "#ececed" : "#ffffff")};
    border: 1px solid #b8bcc4;
    color: ${(props) => (props.$off ? "#8c8c8c" : "#222222")};

    select {
        flex: 1;
        min-width: 0;
        height: 100%;
        padding: 0 22px 0 4px;
        appearance: none;
        background: none;
        border: none;
        outline: none;
        opacity: 1;
    }

    > svg:last-child {
        position: absolute;
        right: 7px;
        pointer-events: none;
    }
`;

const Select = ({ label, options, w, h, off, children }) => (
    <SelectBox $w={w} $h={h} $off={off}>
        {children}
        <select aria-label={label} disabled={off}>
            {options.map((o) => <option key={o}>{o}</option>)}
        </select>
        <Caret small color={off ? "#aaaaaa" : "#444444"} />
    </SelectBox>
);

const Workspace = styled.div`
    display: flex;
    flex: 1;
    min-height: 0;
`;

/* ---------- panels ---------- */

const LeftPanel = styled.aside`
    display: flex;
    flex-direction: column;
    width: 509px;
    flex: none;
`;

const RightPanel = styled.aside`
    display: flex;
    flex-direction: column;
    width: 394px;
    flex: none;
    margin-left: 2px;
`;

const PanelTitle = styled.div`
    display: flex;
    align-items: center;
    gap: 10px;
    height: 27px;
    padding: 2px ${(props) => props.$right || 10}px 0 ${(props) => props.$left || 1}px;
    border-bottom: 1px solid #b8bcc4;
    flex: none;

    span {
        flex: 1;
    }
`;

const PanelRow = styled.div`
    display: flex;
    flex: 1;
    min-height: 0;
`;

const Strip = styled.nav`
    display: flex;
    flex-direction: column;
    width: ${(props) => props.$w}px;
    overflow: hidden;
    flex: none;
`;

const StripTab = styled.button`
    display: flex;
    align-items: center;
    flex: none;
    height: 60px;
    padding: 0 0 4px ${(props) => props.$pad}px;
    background: ${(props) => (props.$on ? "#fcfcfc" : "none")};
    border: none;
    ${(props) => props.$on && "border-bottom: 1px solid #b8bcc4;"}
`;

const PanelBody = styled.div`
    display: flex;
    flex-direction: column;
    flex: 1;
    min-width: 0;
    background: #e1e4e8;
    border: 1px solid #b8bcc4;
    border-top: none;
    padding: ${(props) => props.$pad};
`;

const CommandBar = styled.div`
    display: flex;
    gap: 2px;
    margin-bottom: 4px;
`;

const Spacer = styled.span`
    flex: 1;
`;

const CommandButton = styled.button`
    display: flex;
    align-items: center;
    justify-content: center;
    overflow: hidden;
    width: ${(props) => props.$w || 33}px;
    height: 29px;
    background: #fcfcfc;
    border: 1px solid #b8bcc4;
    font-size: 15px;
`;

const ScrollArea = styled.div`
    display: flex;
    flex: 1;
    min-height: 0;
    gap: 4px;
`;

const Sections = styled.div`
    display: flex;
    flex-direction: column;
    gap: 3px;
    flex: 1;
    overflow: hidden;
`;

const ScrollTrack = styled.div`
    display: flex;
    flex-direction: column;
    align-items: center;
    width: 18px;
    background: #dde1e8;
`;

const ScrollArrow = styled.button`
    display: flex;
    align-items: center;
    justify-content: center;
    width: 100%;
    height: ${(props) => props.$h}px;
    background: none;
    border: none;
`;

const Thumb = styled.div`
    display: flex;
    align-items: center;
    justify-content: center;
    width: 18px;
    flex: 605;
    background: #e8ebf1;
    border: 1px solid #8f96a6;

    span {
        width: 8px;
        height: 8px;
        background: repeating-linear-gradient(#8b8f98 0 1px, transparent 1px 2px);
    }
`;

const ThumbRest = styled.div`
    flex: 60;
`;

const SectionBox = styled.section`
    flex: none;
    background: #dce0e8;
    border: 1px solid #b8bcc6;
`;

const SectionHead = styled.header`
    display: flex;
    align-items: center;
    height: ${(props) => (props.$flat ? 28 : 29)}px;
    padding: 0 14px 0 4px;
    background: #fcfcfc;
    border-bottom: ${(props) => (props.$flat ? "none" : "1px solid #b8bcc6")};

    button {
        display: flex;
        align-items: center;
        gap: 7px;
        flex: 1;
        background: none;
        border: none;
        font-weight: 700;
    }
`;

const Section = ({ title, closed, extra, children }) => (
    <SectionBox>
        <SectionHead $flat={closed}>
            <button type="button" aria-expanded={!closed}>
                <svg width="11" height="11" viewBox="0 0 11 11" aria-hidden="true">
                    <path d={closed ? "M1 0V11L10 6Z" : "M0 1H11L6 10Z"} fill="#4f5561" />
                </svg>
                {title}
            </button>
            {extra}
        </SectionHead>
        {children}
    </SectionBox>
);

const Field = styled.div`
    display: flex;
    align-items: center;
    height: ${(props) => props.$h || 30}px;
    padding: 0 8px 0 10px;
    position: relative;

    > label:first-child, > span:first-child {
        width: 160px;
        flex: none;
        color: ${(props) => (props.$off ? "#a9acb0" : "#222222")};
    }
`;

const TextInput = styled.input`
    flex: ${(props) => (props.$w ? "none" : 1)};
    width: ${(props) => (props.$w ? `${props.$w}px` : "auto")};
    min-width: 0;
    height: ${(props) => props.$h || 26}px;
    padding: 0 2px;
    background: #ffffff;
    border: 1px solid #b8bcc6;
    outline: none;

    &:disabled {
        background: #efefef;
        border-color: #a9a9a9;
        color: #808080;
    }

    ${(props) => props.$focus && `
        border-color: #1286e8;
        box-shadow: inset 0 0 0 1px #b8bcc6;
    `}
`;

const PickRow = styled.div`
    display: flex;
    gap: ${(props) => props.$gap || 1}px;
    padding: ${(props) => props.$pad || "3px 0 1px 173px"};
`;

const PickButton = styled.button`
    display: flex;
    align-items: center;
    justify-content: center;
    width: 45px;
    height: 45px;
    background: ${(props) => (props.$on ? "#ffe077" : "#fcfcfc")};
    border: 1px solid ${(props) => (props.$on ? "#c99a3a" : "#b8bcc6")};
`;

const IconButton = styled.button`
    display: flex;
    align-items: center;
    justify-content: center;
    width: ${(props) => props.$w || 28}px;
    height: 27px;
    flex: none;
    background: ${(props) => (props.$boxed ? "#fcfcfc" : "none")};
    border: 1px solid ${(props) => (props.$boxed ? "#b8bcc6" : "transparent")};
`;

const CheckLine = styled.div`
    display: flex;
    align-items: center;
    gap: 6px;
    height: 28px;
    padding-left: 10px;
`;

const CheckInput = styled.input`
    appearance: none;
    display: grid;
    place-items: center;
    width: 16px;
    height: 16px;
    margin: 0;
    background: #d5dae2;
    border: 1px solid #8b8e94;
    box-shadow: inset 0 0 0 2px #f4f5f7;

    &:checked::after {
        content: "";
        width: 4px;
        height: 9px;
        border: solid #4a6288;
        border-width: 0 2px 2px 0;
        transform: rotate(40deg);
    }
`;

const Preview = styled.figure`
    display: flex;
    flex-direction: column;
    width: 118px;
    height: 118px;
    margin: 4px 0 0 161px;
    background: #ffffff;

    figcaption {
        padding-left: 4px;
    }
`;

const Combo = styled.div`
    display: flex;
    flex: 1;
    height: 25px;
    background: #ffffff;
    position: relative;

    input {
        flex: 1;
        min-width: 0;
        padding: 0 4px;
        background: none;
        border: none;
        outline: none;
    }
`;

const ComboButton = styled.button`
    display: flex;
    align-items: center;
    justify-content: center;
    width: 23px;
    background: #fff0b0;
    border: 5px solid #ee1c25;
`;

const Options = styled.ul`
    position: absolute;
    top: 25px;
    left: 0;
    right: 0;
    z-index: 5;
    margin: 0;
    padding: 0;
    list-style: none;
    background: #ffffff;
    border: 1px solid #b8bcc6;
    box-shadow: 2px 2px 2px #6d7078;
`;

const Option = styled.li`
    height: 20px;
    padding-left: 4px;
    background: ${(props) => (props.$on ? "#0a8cff" : "#ffffff")};
    color: ${(props) => (props.$on ? "#ffffff" : "#444444")};
`;

const Spin = styled.div`
    display: flex;
    align-items: center;
    width: 210px;
    height: 28px;
    padding-right: 4px;
    background: #ffffff;
    border: 1px solid #b8bcc6;

    input {
        flex: 1;
        min-width: 0;
        padding: 0 2px;
        border: none;
        outline: none;
    }
`;

const SpinArrows = styled.div`
    display: flex;
    flex-direction: column;
    margin-left: 7px;

    button {
        height: 13px;
        background: none;
        border: none;
    }
`;

const Number = ({ id, label, unit }) => {
    const [value, setValue] = useState("0");

    return (
        <Field $h={32}>
            <label htmlFor={id}>{label}</label>
            <Spin>
                <input id={id} value={value} onChange={(e) => setValue(e.target.value)} />
                {unit}
                <SpinArrows>
                    <button type="button" aria-label="+"><Caret dir="up" color="#444444" /></button>
                    <button type="button" aria-label="-"><Caret color="#444444" /></button>
                </SpinArrows>
            </Spin>
            <IconButton $w={31} type="button" aria-label={label}><Art name="pullGold" size={19} /></IconButton>
            <Caret />
        </Field>
    );
};

/* ---------- document ---------- */

const Document = styled.main`
    display: flex;
    flex-direction: column;
    flex: 1;
    min-width: 0;
`;

const DocTabs = styled.div`
    display: flex;
    align-items: flex-end;
    height: 27px;
    border-bottom: 1px solid #b8bcc4;
    padding-left: 1px;
    flex: none;
`;

const DocTab = styled.button`
    display: flex;
    align-items: center;
    justify-content: flex-end;
    gap: 7px;
    width: 212px;
    height: 27px;
    margin-bottom: -1px;
    padding: 0 18px 0 0;
    background: #fcfcfc;
    border: 1px solid #b8bcc4;
    border-bottom: none;
`;

const Canvas = styled.div`
    flex: 1;
    min-height: 0;
    position: relative;
    border: solid #b8bcc4;
    border-width: 0 1px;
    background: linear-gradient(#ffffff 0%, #f2f2f2 12%, #e6e6e6 32%, #c8c8c8 64%, #9e9e9e 100%);
`;

const Scene = styled.svg`
    position: absolute;
    inset: 0;
    width: 100%;
    height: 100%;
`;

const ViewBar = styled.div`
    display: flex;
    align-items: center;
    justify-content: center;
    height: 30px;
    position: relative;
`;

const CaretSlot = styled.button`
    display: flex;
    width: 20px;
    padding: 0;
    background: none;
    border: none;
`;

const Hint = styled.p`
    margin: -2px 0 0 21px;
    position: relative;
    color: #111111;
`;

const FileTree = styled.ul`
    height: 194px;
    margin: 0 0 8px;
    padding: 0;
    list-style: none;
    border: 1px solid #b8bcc6;
    background: repeating-linear-gradient(#ffffff 0 23px, #f5f5f5 23px 46px);
    flex: none;
`;

const TreeRow = styled.li`
    display: flex;
    align-items: center;
    gap: 4px;
    height: 23px;

    svg + svg {
        margin-left: 3px;
    }
`;

const NavButton = styled(CommandButton)`
    width: 35px;
    height: 30px;
    margin-right: 2px;
    background: ${(props) => (props.disabled ? "#ebecee" : "#fcfcfc")};
    border-color: ${(props) => (props.disabled ? "#d2d4d8" : "#b8bcc6")};
`;

const FileRow = styled.div`
    display: flex;
    align-items: center;
    gap: 3px;
    height: ${(props) => props.$h || 36}px;
    padding: ${(props) => props.$pt || 0}px 2px 0;
`;

const RowButton = styled.button`
    display: flex;
    align-items: center;
    justify-content: center;
    gap: 10px;
    width: ${(props) => props.$w}px;
    height: 31px;
    background: #fcfcfc;
    border: 1px solid #b8bcc6;
`;

const FileSearch = styled(SelectBox)`
    input {
        flex: 1;
        min-width: 0;
        padding: 0 4px;
        border: none;
        outline: none;
    }

    input::placeholder {
        color: #8c8c8c;
    }
`;

const FileStack = styled.div`
    display: flex;
    flex-direction: column;
    flex: 1;
    min-height: 0;
    gap: 2px;

    > section:nth-child(2) {
        display: flex;
        flex-direction: column;
        flex: 1;
    }
`;

const FileList = styled.div`
    flex: 1;
    background: #ffffff;
    border: solid #b8bcc6;
    border-width: 1px 0;
`;

const BottomTabs = styled.div`
    display: flex;
    height: 28px;
    flex: none;
`;

const BottomTab = styled.button`
    height: 27px;
    padding: 2px 13px 0;
    background: ${(props) => (props.$on ? "#fcfcfc" : "none")};
    border: 1px solid ${(props) => (props.$on ? "#b8bcc4" : "transparent")};
    border-top: none;
`;

const StatusBar = styled.footer`
    display: flex;
    align-items: center;
    gap: 9px;
    height: 31px;
    padding-left: 2px;
    flex: none;

    > span:first-child {
        flex: 1;
        padding-top: 5px;
    }
`;

const CommandLine = styled.input`
    width: 420px;
    height: 27px;
    margin-top: 4px;
    border: 1px solid #b8bcc4;
    border-right: none;
    background: #ffffff;
    outline: none;
`;

/* ---------- data ---------- */

const QUICK = ["file", "open", "save", "print", "printAdd", "undo", "redo", "loop"];

const MENU = ["Soubor", "Upravit", "Zobrazit", "Vložit", "Atributy", "Zjistit", "Nástroje", "Pomůcky", "Aplikace", "Okno", "Nápověda", "Cloud"];

const TABS = [
    "Tvar", "Plošné modelování", "Drátový model", "Přímá editace", "Sestava", "Plechový díl", "Svařování",
    "Mračno bodů", "Výměna dat", "Léčit", "PMI", "Nástroje", "Vizualizovat", "Zjistit", "Konstrukce", "Simulation", "Aplikace"
];

const RIBBON = [
    { name: "Cesta", w: 175, tools: [
        { icon: "frame", w: 60, text: ["3D rám"] },
        { icon: "sketch", w: 44, text: ["Skica", ""], drop: true },
        { icon: "line", w: 68, text: ["Úsečka", ""], drop: true },
    ] },
    { name: "Profil", w: 345, tools: [
        { icon: "cube", w: 92, text: ["Konstrukční", "člen"] },
        { icon: "cubeEdit", w: 86, text: ["Upravit", "konstrukci"] },
        { icon: "cubeReuse", w: 164, text: ["Opětovné použití", "konstrukčního prvku"], drop: true },
    ] },
    { name: "Základní spoj", w: 185, pad: 2, launcher: true, tools: [
        { icon: "miter", w: 58, text: ["Pokos"] },
        { icon: "trimEnd", w: 62, text: ["Oříznutí", "konce"] },
        { icon: "tee", w: 58, text: ["T spoj"] },
    ] },
    { name: "Pokročilý spoj", w: 189, pad: 7, tools: [
        { icon: "overlap", w: 58, text: ["Překrytí"] },
        { icon: "trimFace", w: 66, text: ["Oříznutí", "čela"] },
        { icon: "cross", w: 50, text: ["Křížový", "spoj"] },
    ] },
    { name: "Ošetření spoje", w: 181, pad: 4, tools: [
        { icon: "jointEdit", w: 56, text: ["Upravit", "spoj"] },
        { icon: "clean", w: 116, text: ["Vyčistit neplatný", "spoj"] },
    ] },
    { name: "Prvek", w: 157, pad: 4, tools: [
        { icon: "feature", w: 84, text: ["Konstrukční", "prvek"] },
        { icon: "featureEdit", w: 64, text: ["Upravit", "prvek"] },
    ] },
    { name: "Kusovník", w: 93, tools: [
        { icon: "bom", w: 92, text: ["Konstrukční", "kusovník"] },
    ] },
    { name: "Základní úpravy", w: 187, pad: 5, tools: [
        { icon: "pattern", w: 110, text: ["Pole", "komponentů"] },
        { icon: "mirror", w: 68, text: ["Zrcadlit"] },
    ] },
    { name: "Základna", w: 77, tools: [
        { icon: "plane", w: 76, text: ["Základní", "rovina"], drop: true },
    ] },
    { name: "Knihovna", w: 103, tools: [
        { icon: "wizard", w: 102, text: ["Průvodce", "konstrukcí"] },
    ] },
];

const PICK_TOOLS = ["listA", "listB", "listRed", "listC", "cursorRed", "layersRed", "boxes", "globe", "gearCube"];
const SNAP_TOOLS = ["gHand", "gGear", "gPlay", "gDots", "gLine", "gMid", "gCentre", "gQuad", "gWave", "gSine", "gArch", "gSlash", "gMesh", "gMesh"];

const VIEW_TOOLS = [
    ["exit"], ["style", true], ["eraser"], ["slab"], ["wire", true], ["face", true], ["shade", true], ["zoomPage", true],
    ["target", true], ["fit"], ["dim", true], ["monitor", true], ["blackBar"], ["blueBox"], ["sheets", true]
];

const LEFT_STRIP = ["cube", "tree", "org", "window", "scene", "users"];
const RIGHT_STRIP = ["folder", "folderPart", "sheets", "folderBall", "partRed"];

/* ---------- parts ---------- */

const Header = () => (
    <>
        <TitleBar>
            <Art name="logo" />
            <Divider $h={14} />
            <QuickTools>
                {QUICK.map((name) => (
                    <Slot key={name} type="button" aria-label={name}><Art name={name} /></Slot>
                ))}
                <Slot $w={18} type="button" aria-label="Panel">
                    <svg width="10" height="9" viewBox="0 0 10 9" aria-hidden="true">
                        <path d="M0 0H10V2H0ZM0 4H10L5 9Z" fill="#222" />
                    </svg>
                </Slot>
                <Slot $w={18} type="button" aria-label="Skrýt">
                    <svg width="8" height="15" viewBox="0 0 8 15" aria-hidden="true">
                        <path d="M8 0V15L0 8Z" fill="#1c8ce0" />
                    </svg>
                </Slot>
            </QuickTools>
            <Menu>
                {MENU.map((m) => <MenuItem key={m} type="button">{m}</MenuItem>)}
            </Menu>
            <AppTitle>ZW3D 2026 SP1 x64&nbsp; - [* Sestava001.Z3ASM]</AppTitle>
            <WindowButtons>
                <Slot type="button" aria-label="Minimalizovat"><Art name="winMin" size={15} /></Slot>
                <Slot type="button" aria-label="Obnovit"><Art name="winRestore" size={16} /></Slot>
                <Slot type="button" aria-label="Zavřít"><Art name="closeX" size={16} /></Slot>
            </WindowButtons>
        </TitleBar>
        <TabBar>
            <FileTab type="button">Soubor</FileTab>
            {TABS.map((t) => (
                <RibbonTab key={t} type="button" $on={t === "Konstrukce"}>{t}</RibbonTab>
            ))}
            <TabTools>
                <Slot $w={24} type="button" aria-label="Sbalit"><Art name="collapse" size={13} /></Slot>
                <SearchField>
                    <input placeholder="Najít příkaz" aria-label="Najít příkaz" />
                    <Art name="search" size={15} />
                </SearchField>
                <Slot type="button" aria-label="Volby"><Art name="gear" /></Slot>
                <Slot $w={30} type="button" aria-label="Pomoc"><Art name="help" /></Slot>
                <Slot $w={22} type="button" aria-label="Další"><Caret /></Slot>
                <Slot $w={20} type="button" aria-label="Minimalizovat okno"><Art name="mdiMin" size={12} /></Slot>
                <Slot $w={24} type="button" aria-label="Obnovit okno"><Art name="mdiRestore" size={14} /></Slot>
            </TabTools>
        </TabBar>
    </>
);

const RibbonTools = () => (
    <Ribbon>
        {RIBBON.map((g) => (
            <RibbonGroup key={g.name} $w={g.w}>
                <Tools $pad={g.pad}>
                    {g.tools.map((t) => (
                        <Tool key={t.icon} type="button" $w={t.w}>
                            <Art large name={t.icon} size={40} />
                            {t.text.map((line, i) => (
                                <ToolLine key={i}>
                                    {line}
                                    {t.drop && i === t.text.length - 1 && <Caret />}
                                </ToolLine>
                            ))}
                        </Tool>
                    ))}
                </Tools>
                <GroupCaption>
                    {g.name}
                    {g.launcher && <Art name="launcher" size={9} />}
                </GroupCaption>
            </RibbonGroup>
        ))}
    </Ribbon>
);

const Selection = () => (
    <SelectionBar>
        <Handle />
        <Slot $on $w={27} type="button" aria-label="Výběr"><Art name="pick" /></Slot>
        <Slot type="button" aria-label="Přidat"><Art name="plus" size={18} /></Slot>
        <Slot type="button" aria-label="Odebrat"><Art name="minus" /></Slot>
        <Slot type="button" aria-label="Okno"><Art name="boxAdd" /></Slot>
        <Slot $w={16} type="button" aria-label="Možnosti"><Caret /></Slot>
        <Slot $w={32} type="button" aria-label="Polygon"><Art name="hex" /></Slot>
        <Divider />
        <Slot type="button" aria-label="Filtr"><Art name="filter" /></Slot>
        <Select label="Filtr" w={168} options={["Vše"]} />
        <Slot $on type="button" aria-label="Díl"><Art name="part" /></Slot>
        <Select label="Rozsah" w={168} off options={["Díl a komponent"]} />
        <Slot type="button" aria-label="Ref 1"><Art name="refA" /></Slot>
        <Slot type="button" aria-label="Ref 2"><Art name="refB" /></Slot>
        <Divider $gap={2} />
        {PICK_TOOLS.map((name) => (
            <Slot key={name} type="button" aria-label={name}><Art name={name} /></Slot>
        ))}
        <Divider $gap={2} />
        <Slot type="button" aria-label="Směr"><Art name="gArrow" /></Slot>
        <Slot type="button" aria-label="Křivka"><Art name="gCurve" size={18} /></Slot>
        <Slot type="button" aria-label="Plocha"><Art name="gSquare" size={18} /></Slot>
        <Select label="Výběr" w={168} options={["Jeden výběr"]} />
        {SNAP_TOOLS.map((name, i) => (
            <Slot key={i} type="button" aria-label={name}><Art name={name} /></Slot>
        ))}
    </SelectionBar>
);

const ProfileDrawing = () => (
    <svg width="118" height="98" viewBox="0 0 354 294" aria-hidden="true">
        <path
            d="M11 96H72Q86 96 90 114L110 238Q114 258 134 258H218Q238 258 242 238L262 114Q266 96 282 96H343"
            fill="none" stroke="#1c1c1c" strokeWidth="12" strokeLinecap="round"
        />
        <path
            d="M12 96H72Q86 96 90 114L110 238Q114 258 134 258H218Q238 258 242 238L262 114Q266 96 282 96H342"
            fill="none" stroke="#8a8a8a" strokeWidth="4"
        />
        <g fontFamily="Liberation Sans, sans-serif" fontSize="42">
            <text x="46" y="242" fill="#19c819">Y</text>
            <text x="72" y="272" fill="#e81c1c">X</text>
            <text x="46" y="272" fill="#2020e0">Z</text>
        </g>
    </svg>
);

const MemberForm = () => {
    const [spec, setSpec] = useState("125x75x60x3");
    const [merge, setMerge] = useState(true);

    return (
        <Sections>
            <Section title="Povinné">
                <PickRow>
                    <PickButton $on type="button" aria-label="Křivka"><Art name="pathCurve" size={41} /></PickButton>
                    <PickButton type="button" aria-label="Body"><Art name="pathLine" size={41} /></PickButton>
                </PickRow>
                <Field>
                    <label htmlFor="paths">Cesty</label>
                    <TextInput id="paths" $focus $w={202} $h={28} />
                    <IconButton type="button" aria-label="Více"><Art name="more" size={19} /></IconButton>
                    <IconButton type="button" aria-label="Vybrat"><Art name="pullRed" size={19} /></IconButton>
                </Field>
                <CheckLine>
                    <CheckInput id="merge" type="checkbox" checked={merge} onChange={(e) => setMerge(e.target.checked)} />
                    <label htmlFor="merge">Sloučit kolineární cesty</label>
                </CheckLine>
            </Section>
            <Section title="Profil">
                <Preview>
                    <ProfileDrawing />
                    <figcaption>105 mm</figcaption>
                </Preview>
                <Field $off $h={28}>
                    <label htmlFor="norm">Norma</label>
                    <TextInput id="norm" disabled defaultValue="ČSN" />
                </Field>
                <Field $off $h={31}>
                    <label htmlFor="type">Typ</label>
                    <TextInput id="type" disabled defaultValue="ATYP B" />
                    <IconButton $boxed type="button" aria-label="Knihovna"><Art name="lib" size={24} /></IconButton>
                </Field>
                <Field $h={29}>
                    <label htmlFor="spec">Specifikace</label>
                    <Combo>
                        <input id="spec" role="combobox" aria-expanded="true" value={spec} onChange={(e) => setSpec(e.target.value)} />
                        <ComboButton type="button" aria-label="Rozbalit"><Caret small color="#666666" /></ComboButton>
                        <Options role="listbox">
                            <Option role="option" $on onClick={() => setSpec("100x50x50x2_5")}>100x50x50x2_5</Option>
                            <Option role="option" onClick={() => setSpec("125x75x60x3")}>125x75x60x3</Option>
                        </Options>
                    </Combo>
                </Field>
            </Section>
            <Section title="Transformovat profil">
                <Field $h={35}>
                    <label htmlFor="align">Zarovnat rovinu</label>
                    <TextInput id="align" $w={228} defaultValue="Výchozí CSYS_XY" />
                    <IconButton type="button" aria-label="Vybrat rovinu"><Art name="pullGreen" size={19} /></IconButton>
                </Field>
                <Field $h={28}>
                    <label htmlFor="place">Umístit profil</label>
                    <TextInput id="place" $w={228} />
                    <IconButton type="button" aria-label="Vybrat bod"><Art name="pullGold" size={19} /></IconButton>
                </Field>
                <Number id="shiftX" label="Posun X" unit="mm" />
                <Number id="shiftY" label="Posun Y" unit="mm" />
                <Number id="angle" label="Úhel otočení" unit="deg" />
                <Field $h={48}>
                    <span>Zrcadlový profil</span>
                    <PickRow $gap={3} $pad="0 0 0 66px">
                        <PickButton type="button" aria-label="Zrcadlit svisle"><Art name="mirrorH" size={43} /></PickButton>
                        <PickButton type="button" aria-label="Zrcadlit vodorovně"><Art name="mirrorV" size={43} /></PickButton>
                    </PickRow>
                </Field>
            </Section>
            <Section title="Spoj" closed extra={<CheckInput type="checkbox" aria-label="Spoj" />} />
            <Section title="Nastavení">
                <Field $off $h={34}>
                    <label htmlFor="material">Materiál</label>
                    <TextInput id="material" $w={228} disabled defaultValue="Ocel_uhlík" />
                    <IconButton $boxed type="button" aria-label="Otevřít"><Art name="folder" size={24} /></IconButton>
                </Field>
            </Section>
        </Sections>
    );
};

const MemberPanel = () => (
    <LeftPanel>
        <PanelTitle>
            <span>Konstrukční člen</span>
            <Art name="pin" size={14} />
            <Art name="closeX" size={16} />
        </PanelTitle>
        <PanelRow>
            <Strip $w={36}>
                {LEFT_STRIP.map((name, i) => (
                    <StripTab key={name} type="button" $on={i === 0} $pad={1} aria-label={name}>
                        <Art name={name} large={name === "cube"} size={30} />
                    </StripTab>
                ))}
            </Strip>
            <PanelBody $pad="3px 5px 2px 4px">
                <CommandBar>
                    <CommandButton type="button" aria-label="OK"><Art name="check" /></CommandButton>
                    <CommandButton type="button" aria-label="Zrušit"><Art name="cross" size={18} /></CommandButton>
                    <CommandButton type="button" aria-label="Použít"><Art name="checkBox" /></CommandButton>
                    <Spacer />
                    <CommandButton type="button">F</CommandButton>
                    <CommandButton type="button" aria-label="Info"><Art name="info" size={18} /></CommandButton>
                    <CommandButton $w={18} type="button" aria-label="Ukotvit"><Art name="dock" /></CommandButton>
                </CommandBar>
                <ScrollArea>
                    <MemberForm />
                    <ScrollTrack>
                        <ScrollArrow $h={19} type="button" aria-label="Nahoru"><Caret dir="up" color="#555555" /></ScrollArrow>
                        <Thumb><span /></Thumb>
                        <ThumbRest />
                        <ScrollArrow $h={24} type="button" aria-label="Dolů"><Caret color="#555555" /></ScrollArrow>
                    </ScrollTrack>
                </ScrollArea>
            </PanelBody>
        </PanelRow>
    </LeftPanel>
);

const Wireframe = () => (
    <Scene viewBox="-90 -420 2967 2238" aria-hidden="true">
        <path d="M672 560 697 360 862 424 842 624Z" fill="#b09070" fillOpacity=".2" stroke="#a8742a" strokeWidth="3" />
        <path d="M697 360 826 315 801 514 672 560Z" fill="#b09070" fillOpacity=".1" stroke="#a8742a" strokeWidth="3" />
        <g fill="none" stroke="#000" strokeWidth="6" strokeLinejoin="round">
            <path d="M116 152 415 47 1301 383 1001 487ZM41 736 342 632 1228 968 927 1072Z" />
            <path d="M116 152 41 736M415 47 342 632M1301 383 1228 968M1001 487 927 1072" />
        </g>
        <path d="M672 560 706 290" stroke="#5a50c8" strokeWidth="6" />
        <path d="M675 560 720 170" stroke="#a8690a" strokeWidth="3" />
        <path d="M708 250 717 298Q704 308 691 298Z" fill="#2018f0" />
        <path d="M720 162 726 200Q715 207 706 200Z" fill="#c88412" />
        <path d="M672 560 910 477" stroke="#a8690a" strokeWidth="3" />
        <path d="M672 560 850 498" stroke="#6f9a1e" strokeWidth="6" />
        <path d="M874 491 848 514Q830 506 832 494Q840 484 850 490Z" fill="#188c18" />
        <path d="M928 473 908 490Q892 484 896 472Q902 466 910 469Z" fill="#9a5e0a" />
        <path d="M842 624 1000 684" stroke="#a8690a" strokeWidth="3" />
        <path d="M842 624 900 645" stroke="#f01818" strokeWidth="6" />
        <path d="M934 658 894 630Q884 640 886 654Z" fill="#f01818" />
        <path d="M1003 685 974 668Q966 676 968 684Z" fill="#e09c20" stroke="#7a4a08" strokeWidth="2" />
        <path d="M672 560 842 624 968 578 801 514" fill="none" stroke="#ff9a00" strokeWidth="9" strokeLinejoin="round" />
        <g fontFamily="Liberation Sans, sans-serif" fontSize="60" fill="#a8690a">
            <text x="707" y="140">Z</text>
            <text x="938" y="482">Y</text>
            <text x="1022" y="722">X</text>
        </g>
    </Scene>
);

const View = () => (
    <Document>
        <DocTabs>
            <DocTab type="button">* Sestava001.Z3ASM <Art name="tabX" size={15} /></DocTab>
            <Slot type="button" aria-label="Nová karta"><Art name="tabPlus" size={18} /></Slot>
            <Spacer />
            <Slot $w={26} type="button" aria-label="Seznam karet"><Art name="tabMenu" size={15} /></Slot>
        </DocTabs>
        <Canvas>
            <Wireframe />
            <ViewBar>
                {VIEW_TOOLS.map(([name, drop]) => (
                    <React.Fragment key={name}>
                        <Slot type="button" aria-label={name}><Art name={name} size={21} /></Slot>
                        {drop && <CaretSlot type="button" aria-label={`${name} +`}><Caret /></CaretSlot>}
                    </React.Fragment>
                ))}
                <Select label="Hladina" w={144} off options={["Hladina0000"]}>
                    <Slot $w={25} as="span"><Art name="bulb" size={17} /></Slot>
                    <Art name="disc" size={16} />
                </Select>
            </ViewBar>
            <Hint>
                &lt;F8&gt; nebo &lt;Shift-roll&gt; pro nalezení dalšího platného nastavení filtru.<br />
                &lt;Shift-pravý-klik&gt; pro zobrazení filtru výběru.
            </Hint>
        </Canvas>
    </Document>
);

const FilePanel = () => (
    <RightPanel>
        <PanelTitle $left={6} $right={13}>
            <span>Prohlížeč souborů</span>
            <Art name="pin" size={14} />
        </PanelTitle>
        <PanelRow>
            <PanelBody $pad="2px 1px 2px">
                <CommandBar>
                    <NavButton disabled type="button" aria-label="Zpět"><Art name="back" /></NavButton>
                    <NavButton disabled type="button" aria-label="Vpřed"><Art name="forward" /></NavButton>
                    <NavButton disabled type="button" aria-label="Nahoru"><Art name="up" /></NavButton>
                    <NavButton type="button" aria-label="Obnovit"><Art name="refresh" size={22} /></NavButton>
                </CommandBar>
                <FileTree>
                    <TreeRow><Art name="chevron" size={16} /><Art name="star" /> Oblíbené</TreeRow>
                    <TreeRow><Art name="chevron" size={16} /><Art name="folder" /> (C:)</TreeRow>
                </FileTree>
                <FileStack>
                    <Section title="Hledat">
                        <FileRow>
                            <FileSearch $h={31}>
                                <input placeholder="Hledat..." aria-label="Hledat" />
                                <Caret small />
                            </FileSearch>
                            <RowButton $w={47} type="button" aria-label="Hledat"><Art name="search" /></RowButton>
                            <RowButton $w={47} type="button" aria-label="Nástroje"><Art name="pliers" /></RowButton>
                        </FileRow>
                    </Section>
                    <Section title="Seznam souborů">
                        <FileRow $h={38}>
                            <RowButton $w={53} type="button" aria-label="Zobrazení"><Art name="grid" size={22} /><Caret /></RowButton>
                            <Select label="Typ souborů" h={32} options={["All Support Files"]} />
                        </FileRow>
                        <FileList />
                        <FileRow $pt={3}>
                            <span>Seznam objektů</span>
                            <Select label="Seznam objektů" h={32} options={[""]} />
                        </FileRow>
                    </Section>
                    <Section title="Náhled" closed />
                </FileStack>
            </PanelBody>
            <Strip $w={20}>
                {RIGHT_STRIP.map((name, i) => (
                    <StripTab key={name} type="button" $on={i === 0} $pad={4} aria-label={name}>
                        <Art name={name} size={30} />
                    </StripTab>
                ))}
            </Strip>
        </PanelRow>
        <BottomTabs>
            <BottomTab $on type="button">Prohlížeč souborů</BottomTab>
            <BottomTab type="button">Výstup</BottomTab>
        </BottomTabs>
    </RightPanel>
);

const Status = () => (
    <StatusBar>
        <span>Vyberte čáry a křivky k vytvoření konstrukčních členů.</span>
        <Divider $h={28} />
        <Slot $on type="button" aria-label="Správce"><Art name="tools" /></Slot>
        <Slot $on type="button" aria-label="Zobrazení"><Art name="screen" /></Slot>
        <Slot type="button" aria-label="Výstup"><Art name="note" /></Slot>
        <CommandLine aria-label="Příkaz" />
    </StatusBar>
);

function App() {
    return (
        <Shell>
            <GlobalStyle />
            <Header />
            <RibbonTools />
            <Selection />
            <Workspace>
                <MemberPanel />
                <View />
                <FilePanel />
            </Workspace>
            <Status />
            <Defs />
        </Shell>
    );
}

export default App;
